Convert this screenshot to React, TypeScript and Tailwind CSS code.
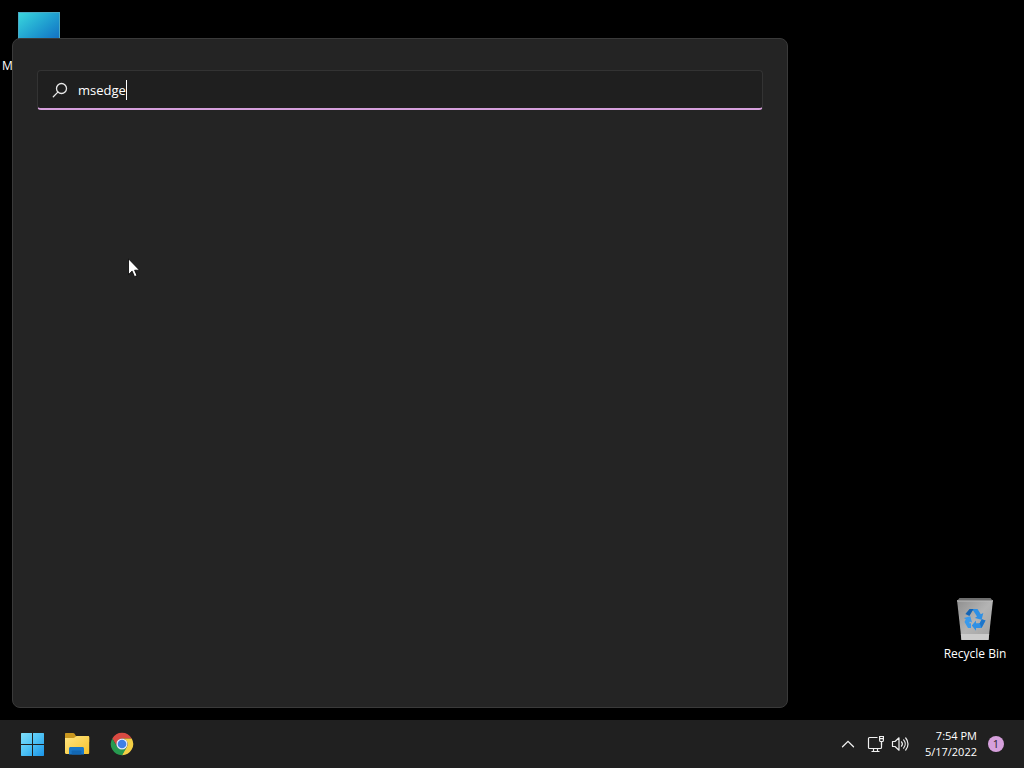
import React, { useState } from 'react';

const WindowsLogo: React.FC = () => (
  <svg width="24" height="24" viewBox="0 0 24 24" aria-hidden="true">
    <defs>
      <linearGradient id="win" x1="0" y1="0" x2="24" y2="24" gradientUnits="userSpaceOnUse">
        <stop offset="0" stopColor="#84e2fb" />
        <stop offset="0.5" stopColor="#4fc3f5" />
        <stop offset="1" stopColor="#1a94e8" />
      </linearGradient>
    </defs>
    <path
      fill="url(#win)"
      d="M1.500 1H12v10.900H1V1.500zM13 1h10.500l.5.500v10.400H13zM1 13h11v11H1.500l-.5-.5zM13 13h11v10.500l-.5.5H13z"
    />
  </svg>
);

const FolderIcon: React.FC = () => (
  <svg width="26" height="24" viewBox="0 0 26 24" aria-hidden="true">
    <defs>
      <linearGradient id="folder" x1="0" y1="0" x2="1" y2="1">
        <stop offset="0" stopColor="#ffe582" />
        <stop offset="1" stopColor="#f7c32c" />
      </linearGradient>
    </defs>
    <path fill="#c9971f" d="M2 1h7.200c.5 0 .8.200 1.200.6L12 4H24c.8 0 1.200.5 1.200 1.200V10H1V2c0-.6.4-1 1-1z" />
    <path fill="url(#folder)" d="M1 6h8.600c.5 0 .8-.2 1.100-.5l1.100-1c.3-.3.7-.5 1.200-.5H24c.8 0 1.200.5 1.200 1.200v15.600c0 .8-.5 1.200-1.200 1.200H2.200C1.400 22 1 21.500 1 20.800z" />
    <path fill="#1a78c8" d="M5 22.500v-6c0-.9.6-1.500 1.500-1.500h12c.9 0 1.500.6 1.500 1.500v6z" />
    <path fill="#1267b3" d="M8.500 18.500h8c.5 0 .8.300.8.800v3.200H7.700v-3.200c0-.5.300-.8.800-.8z" />
  </svg>
);

const ChromeIcon: React.FC = () => (
  <svg width="24" height="24" viewBox="0 0 24 24" aria-hidden="true">
    <path fill="#d94a42" d="M2.300 6.400a11.200 11.200 0 0 1 19.400 0H12a5.600 5.600 0 0 0-4.850 8.400z" />
    <path fill="#279a50" d="M2.300 6.400 7.150 14.800A5.600 5.600 0 0 0 12 17.600h4.850L12 23.200A11.200 11.200 0 0 1 2.300 6.400z" />
    <path fill="#f3cf45" d="M21.700 6.400A11.200 11.200 0 0 1 12 23.200l4.850-8.400A5.600 5.600 0 0 0 12 6.400z" />
    <path fill="#279a50" d="M7.150 14.800A5.600 5.600 0 0 0 16.850 14.800L12 23.200z" />
    <circle cx="12" cy="12" r="5.600" fill="#e6ecf8" />
    <circle cx="12" cy="12" r="4.300" fill="#3f7fe6" />
  </svg>
);

const SearchIcon: React.FC = () => (
  <svg width="16" height="16" viewBox="0 0 16 16" fill="none" stroke="#e8e8e8" strokeWidth="1.300" strokeLinecap="round" aria-hidden="true">
    <circle cx="9.500" cy="6.500" r="5" />
    <path d="M5.900 10.100 1.300 14.700" />
  </svg>
);

const NetworkIcon: React.FC = () => (
  <svg width="18" height="18" viewBox="0 0 18 18" fill="none" stroke="#f0f0f0" strokeWidth="1.200" aria-hidden="true">
    <path d="M10.500 2.500h-8c-.6 0-1 .4-1 1v9c0 .6.400 1 1 1h11c.6 0 1-.4 1-1V8" />
    <path d="M6.500 13.500v3M10.500 13.500v3M4.500 16.500h8" />
    <path d="M12.600 1.500h3.800v3.700c0 .9-.7 1.500-1.400 1.500h-1c-.8 0-1.400-.6-1.400-1.500zM12.600 3.700h3.800M14.500 6.700V10" />
  </svg>
);

const SpeakerIcon: React.FC = () => (
  <svg width="18" height="18" viewBox="0 0 18 18" fill="none" stroke="#f0f0f0" strokeWidth="1.200" strokeLinecap="round" strokeLinejoin="round" aria-hidden="true">
    <path d="M1.500 6.500H4l4-3.700v12.400l-4-3.700H1.500z" />
    <path d="M10.500 6.800a3.500 3.500 0 0 1 0 4.400M12.600 4.900a6.200 6.200 0 0 1 0 8.200M14.700 3a9 9 0 0 1 0 12" />
  </svg>
);

const RecycleBinIcon: React.FC = () => (
  <svg width="38" height="44" viewBox="0 0 38 44" aria-hidden="true">
    <defs>
      <linearGradient id="bin" x1="0" y1="0" x2="1" y2="1">
        <stop offset="0" stopColor="#8f8f8f" />
        <stop offset="0.5" stopColor="#b4b4b4" />
        <stop offset="1" stopColor="#a0a0a0" />
      </linearGradient>
    </defs>
    <path fill="url(#bin)" d="M1 3 37 3 32.500 43h-27z" />
    <path fill="#6f6f6f" d="M3.500 1h31L37 4H1z" />
    <path fill="#bdbdbd" d="M1 3.500h36v1H1z" />
    <path fill="#cbcbcb" d="M4.800 37h28.400l-.7 6h-27z" />
    <g transform="translate(19 21.500)">
      <path fill="#2e90e5" d="M-5.500-9.500H2.500L5.800-4.200 8.300-5.600 6.600 1.200-.2-.6 2-1.900-1.500-7.500z" />
      <path fill="#1464b4" d="M-5.500-9.500h4L-5.600-2.400-9.600-4.500z" />
      <path fill="#2e90e5" d="M10.500 2 6.500 9.500H1v2.800L-3.200 7 1 2v2.700h3.700L6.800.8z" />
      <path fill="#1d75ca" d="m6.500 9.500 4-7.500-3.700-1.200-2.100 3.900z" />
      <path fill="#3a9aec" d="M-7 9.500-10.500 3.500l1.300-2.700-2-1.200 6.500-1.800 1.700 6.300-2.100-1.100-.7 1.700H-4v4.800z" />
    </g>
  </svg>
);

const MousePointer: React.FC = () => (
  <svg width="12" height="20" viewBox="0 0 12 20" className="absolute left-[128px] top-[258px]" aria-hidden="true">
    <path fill="#fff" stroke="#000" strokeWidth="0.800" d="M.5.800v15.800l3.600-3.500 2.400 5.600 2.500-1.100-2.400-5.400h4.900z" />
  </svg>
);

const SearchPanel: React.FC = () => {
  const [query, setQuery] = useState('msedge');

  return (
    <section className="absolute bottom-3 left-3 top-[38px] w-[776px] max-w-full rounded-lg border border-[#3a3a3a] bg-[#242424] px-6 py-[31px]">
      <label className="flex h-10 cursor-text items-center overflow-hidden rounded border border-b-2 border-[#333333] border-b-[#d6a0dc] bg-[#1f1f1f] px-[14px]">
        <SearchIcon />
        <input
          type="text"
          aria-label="Search"
          value={query}
          onChange={(e) => setQuery(e.target.value)}
          className="field-sizing-content ml-[10px] bg-transparent text-[13px] leading-5 text-white caret-transparent outline-none"
        />
        <span className="h-5 w-px bg-white"></span>
      </label>
    </section>
  );
};

const Taskbar: React.FC = () => (
  <footer className="flex h-12 shrink-0 items-center justify-between bg-[#202020] px-5">
    <nav className="flex items-center gap-5">
      <button aria-label="Start"><WindowsLogo /></button>
      <button aria-label="File Explorer"><FolderIcon /></button>
      <button aria-label="Google Chrome"><ChromeIcon /></button>
    </nav>

    <div className="flex items-center">
      <button aria-label="Show hidden icons" className="mr-3">
        <svg width="14" height="14" viewBox="0 0 14 14" fill="none" stroke="#f0f0f0" strokeWidth="1.300" strokeLinecap="round" aria-hidden="true">
          <path d="m1.500 9.700 5.500-5.400 5.500 5.400" />
        </svg>
      </button>
      <button className="flex items-center gap-[6px]" aria-label="Network and volume">
        <NetworkIcon />
        <SpeakerIcon />
      </button>
      <button className="ml-4 text-right text-[11px] leading-4 text-white">
        <span className="block">7:54 PM</span>
        <span className="block">5/17/2022</span>
      </button>
      <button className="ml-[11px] flex size-4 items-center justify-center rounded-full bg-[#d6a0dc] text-[11px] leading-4 text-[#2b1f2d]">
        1
      </button>
    </div>
  </footer>
);

const App: React.FC = () => {
  return (
    <div className="flex h-screen flex-col overflow-hidden bg-black font-['Open_Sans','Noto_Sans',sans-serif]">
      <main className="relative flex-1">
        {/* Desktop icons */}
        <div className="absolute left-[2px] top-3 text-xs text-white">
          <div className="ml-4 h-[34px] w-[42px] border border-[#4aa9c4] bg-gradient-to-br from-[#3ad6dc] to-[#1565c0]"></div>
          <span className="mt-3 block leading-4">M</span>
        </div>
        <button className="absolute bottom-[58px] right-3 flex w-[74px] flex-col items-center gap-[5px] text-xs leading-4 text-white">
          <RecycleBinIcon />
          Recycle Bin
        </button>

        <SearchPanel />
        <MousePointer />
      </main>
      <Taskbar />
    </div>
  );
};

export default App;
